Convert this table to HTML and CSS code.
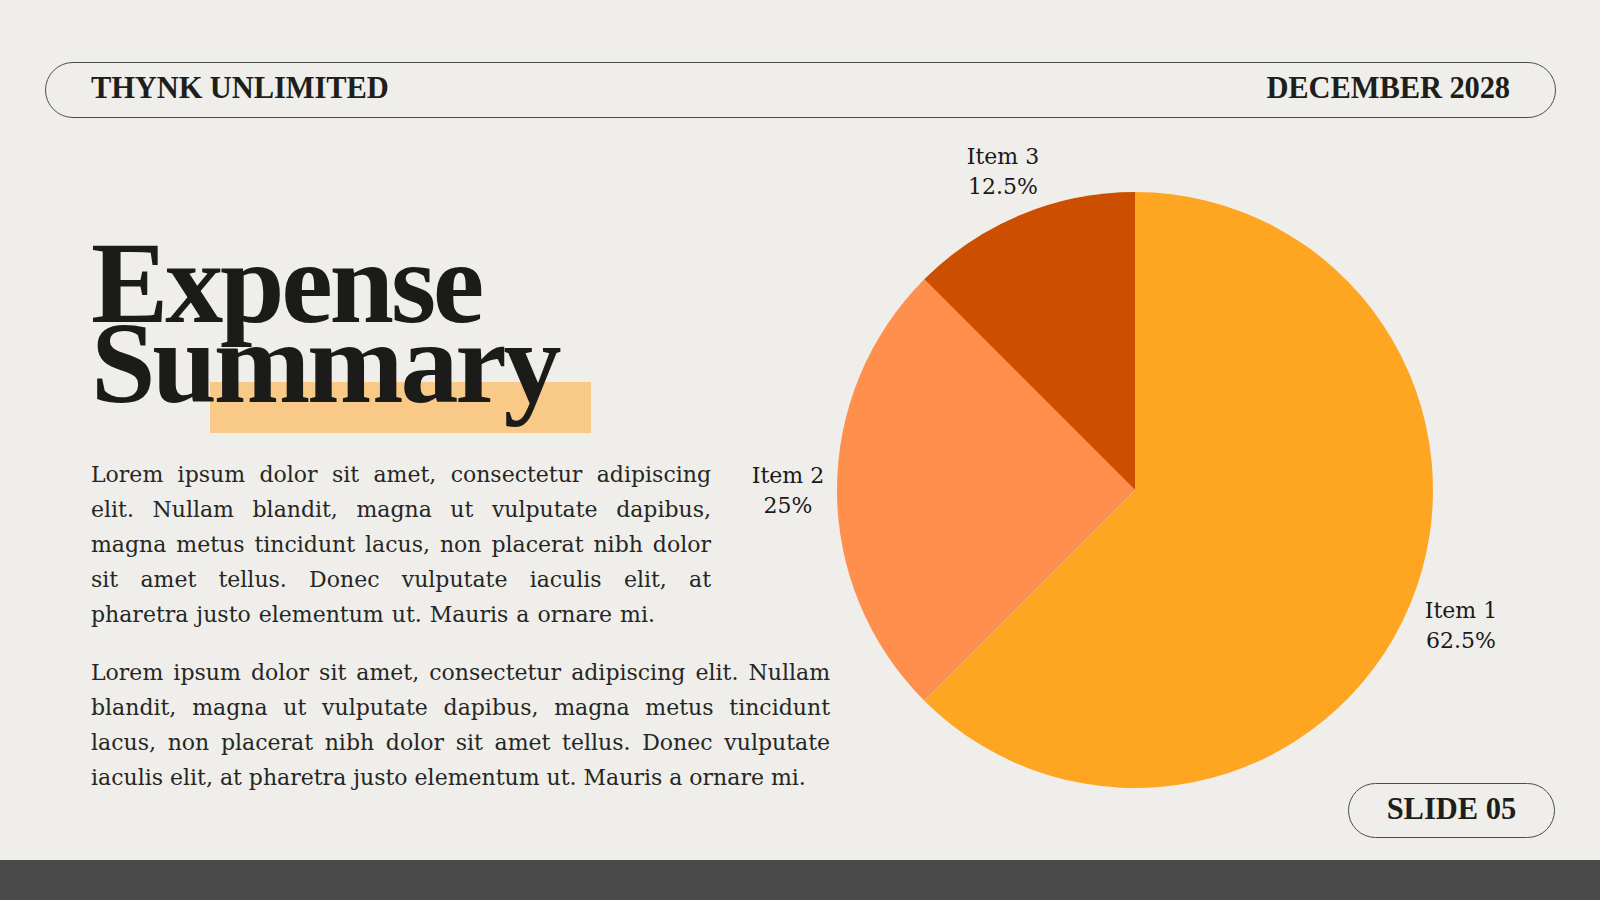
FILE: index.html
```html
<!DOCTYPE html>
<html lang="en">
<head>
<meta charset="utf-8">
<title>Expense Summary</title>
<link rel="stylesheet" href="styles.css">
</head>
<body>
<div class="slide">
  <header class="topbar">
    <span class="brand">THYNK UNLIMITED</span>
    <span class="date">DECEMBER 2028</span>
  </header>

  <main class="main">
    <section class="text-col">
      <h1 class="title"><span class="title-line">Expense</span><span class="title-line">Summary</span></h1>
      <p class="para para-narrow">Lorem ipsum dolor sit amet, consectetur adipiscing elit. Nullam blandit, magna ut vulputate dapibus, magna metus tincidunt lacus, non placerat nibh dolor sit amet tellus. Donec vulputate iaculis elit, at pharetra justo elementum ut. Mauris a ornare mi.</p>
      <p class="para para-wide">Lorem ipsum dolor sit amet, consectetur adipiscing elit. Nullam blandit, magna ut vulputate dapibus, magna metus tincidunt lacus, non placerat nibh dolor sit amet tellus. Donec vulputate iaculis elit, at pharetra justo elementum ut. Mauris a ornare mi.</p>
    </section>

    <section class="chart">
      <svg class="pie" width="596" height="596" viewBox="0 0 596 596" aria-label="Pie chart">
        <path class="slice-1" d="M298,298 L298,0 A298,298 0 1 1 87.28,508.72 Z"/>
        <path class="slice-2" d="M298,298 L87.28,508.72 A298,298 0 0 1 87.28,87.28 Z"/>
        <path class="slice-3" d="M298,298 L87.28,87.28 A298,298 0 0 1 298,0 Z"/>
      </svg>
      <div class="label label-3">Item 3<br>12.5%</div>
      <div class="label label-2">Item 2<br>25%</div>
      <div class="label label-1">Item 1<br>62.5%</div>
    </section>
  </main>

  <footer class="footer">
    <span class="slide-no">SLIDE 05</span>
  </footer>
  <div class="bottom-bar"></div>
</div>
</body>
</html>
```

FILE: styles.css
```css
* {
  box-sizing: border-box;
}

html, body {
  margin: 0;
  padding: 0;
}

body {
  background: #efeeea;
  font-family: "DejaVu Serif", "Liberation Serif", serif;
  color: #222;
}

.slide {
  width: 1600px;
  height: 900px;
  display: flex;
  flex-direction: column;
  background: #efeeea;
  overflow: hidden;
}

/* Header pill */
.topbar {
  margin: 62px 44px 0 45px;
  height: 56px;
  border: 1.5px solid #4d4d4d;
  border-radius: 28px;
  padding: 0 45px 3px;
  display: flex;
  align-items: center;
  justify-content: space-between;
  font-family: "Liberation Serif", serif;
  font-weight: 700;
  font-size: 30.5px;
  letter-spacing: -0.1px;
  color: #1e1e1c;
  line-height: 1;
}

/* Main */
.main {
  height: 665px;
  display: flex;
  align-items: flex-start;
}

.text-col {
  margin-left: 91px;
  width: 739px;
  padding-top: 125px;
  display: flex;
  flex-direction: column;
}

.title {
  position: relative;
  isolation: isolate;
  margin: 0;
  font-family: "Liberation Serif", serif;
  font-weight: 700;
  font-size: 116px;
  line-height: 80px;
  letter-spacing: -3.2px;
  color: #1b1b19;
  display: flex;
  flex-direction: column;
}

.title::after {
  content: "";
  position: absolute;
  left: 119px;
  top: 139px;
  width: 381px;
  height: 51px;
  background: #f8c987;
  z-index: -1;
}

.title-line {
  display: block;
}

.para {
  margin: 0;
  font-size: 22px;
  line-height: 35px;
  text-align: justify;
  color: #262624;
}

.para-narrow {
  width: 620px;
  margin-top: 54px;
  word-spacing: 1px;
}

.para-wide {
  width: 739px;
  margin-top: 23px;
}

/* Chart */
.chart {
  position: relative;
  margin-left: 7px;
  margin-top: 74px;
  width: 596px;
  height: 591px;
}

.pie {
  display: block;
  overflow: visible;
}

.slice-1 { fill: #fea622; }
.slice-2 { fill: #ff8f4c; }
.slice-3 { fill: #cc4f01; }

.label {
  position: absolute;
  width: 140px;
  text-align: center;
  font-size: 22px;
  line-height: 30px;
  color: #1a1a1a;
}

.label-3 { left: 96px; top: -50px; }
.label-2 { left: -119px; top: 269px; }
.label-1 { left: 554px; top: 404px; }

/* Footer */
.footer {
  height: 55px;
  display: flex;
  justify-content: flex-end;
  padding-right: 45px;
}

.slide-no {
  width: 207px;
  height: 55px;
  border: 1.5px solid #4d4d4d;
  border-radius: 28px;
  padding-bottom: 2px;
  display: flex;
  align-items: center;
  justify-content: center;
  font-family: "Liberation Serif", serif;
  font-weight: 700;
  font-size: 30.5px;
  color: #1e1e1c;
}

.bottom-bar {
  margin-top: 22px;
  height: 40px;
  background: #4a4a4a;
}
```
